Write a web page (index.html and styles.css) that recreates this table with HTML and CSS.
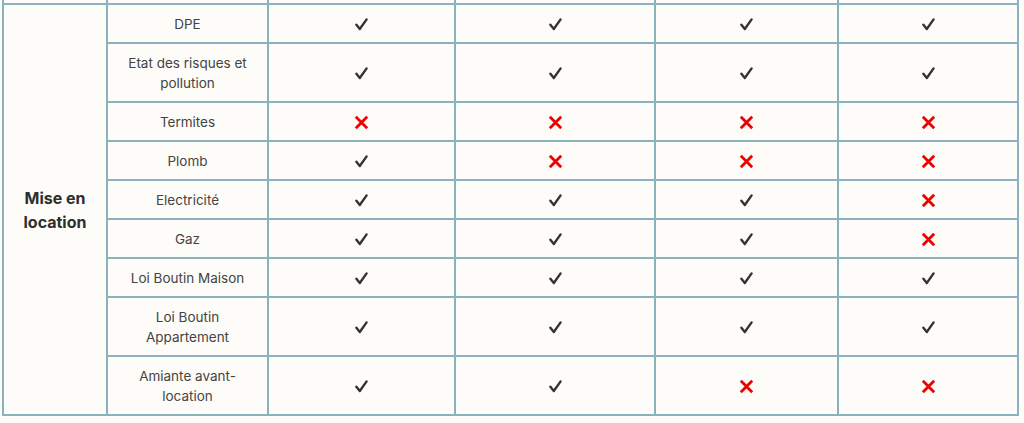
FILE: index.html
```html
<!DOCTYPE html>
<html lang="fr">
<head>
<meta charset="utf-8">
<link rel="stylesheet" href="styles.css">
</head>
<body>
<div class="wrap">
<table class="grid">
  <colgroup>
    <col class="c1"><col class="c2"><col class="c3"><col class="c4"><col class="c5"><col class="c6">
  </colgroup>
  <tbody>
    <tr class="prev"><td></td><td></td><td></td><td></td><td></td><td></td></tr>
    <tr>
      <th rowspan="9" class="group">Mise en<br>location</th>
      <td class="label">DPE</td>
      <td><span class="ok"></span></td><td><span class="ok"></span></td><td><span class="ok"></span></td><td><span class="ok"></span></td>
    </tr>
    <tr>
      <td class="label">Etat des risques et<br>pollution</td>
      <td><span class="ok"></span></td><td><span class="ok"></span></td><td><span class="ok"></span></td><td><span class="ok"></span></td>
    </tr>
    <tr>
      <td class="label">Termites</td>
      <td><span class="no"></span></td><td><span class="no"></span></td><td><span class="no"></span></td><td><span class="no"></span></td>
    </tr>
    <tr>
      <td class="label">Plomb</td>
      <td><span class="ok"></span></td><td><span class="no"></span></td><td><span class="no"></span></td><td><span class="no"></span></td>
    </tr>
    <tr>
      <td class="label">Electricité</td>
      <td><span class="ok"></span></td><td><span class="ok"></span></td><td><span class="ok"></span></td><td><span class="no"></span></td>
    </tr>
    <tr>
      <td class="label">Gaz</td>
      <td><span class="ok"></span></td><td><span class="ok"></span></td><td><span class="ok"></span></td><td><span class="no"></span></td>
    </tr>
    <tr>
      <td class="label">Loi Boutin Maison</td>
      <td><span class="ok"></span></td><td><span class="ok"></span></td><td><span class="ok"></span></td><td><span class="ok"></span></td>
    </tr>
    <tr>
      <td class="label">Loi Boutin<br>Appartement</td>
      <td><span class="ok"></span></td><td><span class="ok"></span></td><td><span class="ok"></span></td><td><span class="ok"></span></td>
    </tr>
    <tr>
      <td class="label">Amiante avant-<br>location</td>
      <td><span class="ok"></span></td><td><span class="ok"></span></td><td><span class="no"></span></td><td><span class="no"></span></td>
    </tr>
  </tbody>
</table>
</div>
</body>
</html>
```
FILE: styles.css
```css
html, body {
  margin: 0;
  padding: 0;
  background: #fdfcf8;
}
.wrap {
  padding-left: 2px;
}
.grid {
  border-collapse: collapse;
  table-layout: fixed;
  width: 1017px;
  font-family: Inter, "Open Sans", "Liberation Sans", sans-serif;
  font-size: 13.5px;
  line-height: 20px;
  color: #444;
}
.c1 { width: 104px; }
.c2 { width: 161px; }
.c3 { width: 187px; }
.c4 { width: 200px; }
.c5 { width: 183px; }
.c6 { width: 180px; }
.grid td, .grid th {
  border: 2px solid #8ab3bd;
  text-align: center;
  vertical-align: middle;
  padding: 8.5px 4px;
  height: 20px;
}
.grid .prev td {
  border-top: none;
  height: 3px;
  padding: 0;
}
.group {
  font-size: 16px;
  font-weight: 700;
  line-height: 24px;
  color: #2e2e2e;
}
.ok, .no {
  display: inline-block;
  vertical-align: middle;
}
.ok {
  width: 13px;
  height: 13px;
  background: url("data:image/svg+xml;utf8,<svg xmlns='http://www.w3.org/2000/svg' viewBox='0 0 13 13'><path d='M1.4 6.8 L4.8 11 L11.6 1.4' fill='none' stroke='%23333' stroke-width='2.4' stroke-linecap='round' stroke-linejoin='round'/></svg>") no-repeat center / contain;
}
.no {
  width: 15px;
  height: 15px;
  background: url("data:image/svg+xml;utf8,<svg xmlns='http://www.w3.org/2000/svg' viewBox='0 0 15 15'><path d='M1.8 1.8 L13.2 13.2 M13.2 1.8 L1.8 13.2' fill='none' stroke='%23ee0000' stroke-width='2.8'/></svg>") no-repeat center / contain;
}
```
